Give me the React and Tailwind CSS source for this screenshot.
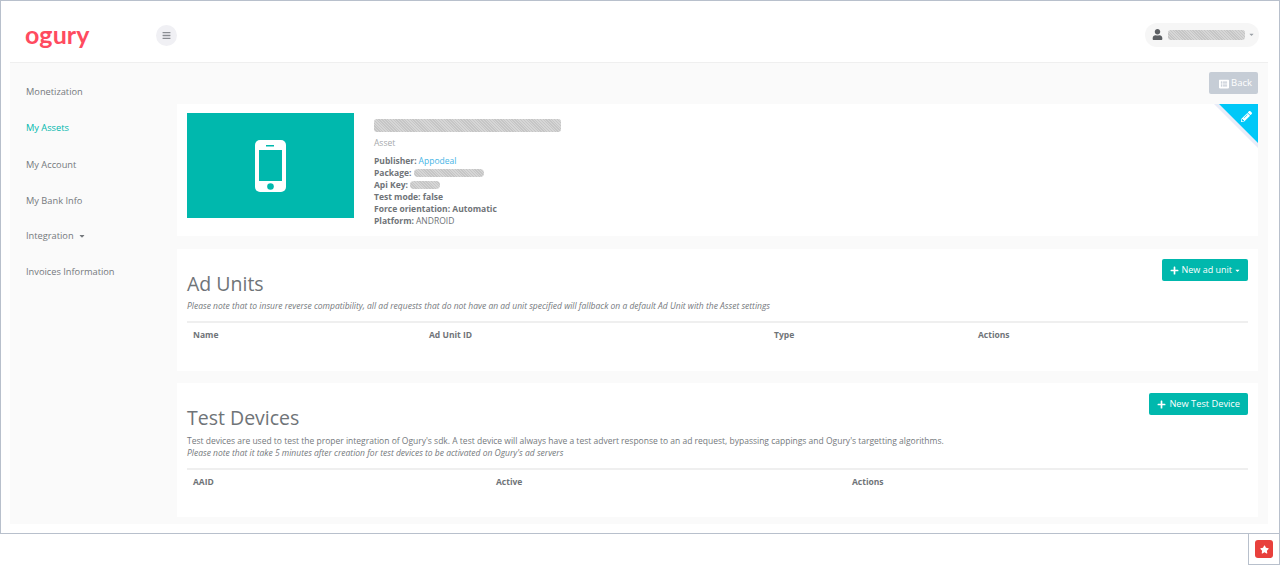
import { FaUser, FaBars, FaPencilAlt, FaPlus, FaStar, FaCaretDown, FaListAlt } from "react-icons/fa"

const Redacted = ({ className }) => (
    <span className={`inline-block bg-[#cdcdcd] bg-[repeating-linear-gradient(45deg,#c6c6c6_0px,#c6c6c6_1px,#d6d6d6_1px,#d6d6d6_2px)] ${className}`} />
)

const SideItem = ({ label, active, caret, className }) => (
    <div className={`flex items-center gap-1 pl-[16px] text-[9.25px] leading-[14px] ${active ? "text-[#00b8ad]" : "text-[#75797d]"} ${className}`}>
        {label}
        {caret && <FaCaretDown className="text-[8px]" />}
    </div>
)

const InfoRow = ({ label, children }) => (
    <div className="flex items-center h-[12px] text-[8.5px] leading-[12px] text-[#6f7478]">
        <span className="font-bold">{label}</span>
        {children}
    </div>
)

const TealButton = ({ label, caret }) => (
    <button className={`flex items-center h-[22px] pl-[8px] rounded-[2px] bg-[#00b8ad] text-white ${caret ? "gap-[2px] pr-[7px] text-[9px]" : "gap-[3px] pr-[8px] text-[9.25px]"}`}>
        <FaPlus className="text-[9px]" />
        {label}
        {caret && <FaCaretDown className="text-[7px]" />}
    </button>
)

const TableHead = ({ cols }) => (
    <div className="flex items-center h-[26px] border-t-2 border-[#efefef] pl-[6px] text-[8.5px] font-bold text-[#6f7478]">
        {cols.map((c) => (
            <div key={c.label} style={{ width: c.width }}>{c.label}</div>
        ))}
    </div>
)

const Phone = () => (
    <svg width="31" height="52" viewBox="0 0 31 52">
        <rect width="31" height="52" rx="5" fill="#fff" />
        <rect x="4" y="10" width="23" height="31" fill="#00b8ad" />
        <rect x="11" y="5" width="8" height="1.500" fill="#00b8ad" />
        <circle cx="15.500" cy="46.500" r="3.300" fill="#00b8ad" />
    </svg>
)

export default function App() {
    return (
        <div className="relative w-[1280px] h-[565px] overflow-hidden bg-white font-['Open_Sans',sans-serif]">
            <div className="h-[534px] border border-[#b8c0cc] flex flex-col">
                <header className="h-[61px] shrink-0 flex items-center pt-[6px] pl-[24px] pr-[20px]">
                    <div className="w-[131px] -mt-[1px] font-['Lato',sans-serif] text-[25px] leading-none font-bold tracking-[0.1px] text-[#ff4b5f]">ogury</div>
                    <div className="flex items-center justify-center w-[21px] h-[21px] mt-[1px] rounded-full bg-[#f0f0f4] text-[#8a8d92]">
                        <FaBars className="text-[9px]" />
                    </div>
                    <div className="ml-auto flex items-center w-[114px] h-[24px] pl-[7px] rounded-full bg-[#f6f6f6]">
                        <FaUser className="text-[11px] text-[#5c5f63]" />
                        <Redacted className="ml-[5px] w-[77px] h-[10px] rounded-[3px]" />
                        <FaCaretDown className="ml-[3px] text-[7px] text-[#9aa0a6]" />
                    </div>
                </header>
                <div className="flex ml-[9px] mr-[11px] h-[462px] border-t border-[#efefef] bg-[#fafafa]">
                    <nav className="w-[167px] shrink-0 pt-[22px]">
                        <SideItem label="Monetization" />
                        <SideItem label="My Assets" active className="mt-[22px]" />
                        <SideItem label="My Account" className="mt-[23px]" />
                        <SideItem label="My Bank Info" className="mt-[22px]" />
                        <SideItem label="Integration" caret className="mt-[21px]" />
                        <SideItem label="Invoices Information" className="mt-[22px]" />
                    </nav>
                    <main className="w-[1081px] flex flex-col">
                        <div className="flex justify-end pt-[9px] h-[41px]">
                            <button className="flex items-center gap-[2px] w-[49px] h-[22px] pl-[10px] pt-[1px] rounded-[2px] bg-[#c6cdd6] text-white text-[9.5px]">
                                <FaListAlt className="text-[10px]" />
                                Back
                            </button>
                        </div>
                        <section className="relative h-[132px] bg-white flex pt-[9px] pl-[10px] overflow-hidden">
                            <div className="flex items-center justify-center w-[167px] h-[105px] bg-[#00b8ad]">
                                <Phone />
                            </div>
                            <div className="ml-[20px]">
                                <Redacted className="block w-[187px] h-[13px] mt-[6px] rounded-[3px]" />
                                <div className="-mt-[1px] text-[8.5px] leading-[12px] text-[#a6a9ac]">Asset</div>
                                <div className="mt-[6px]">
                                    <InfoRow label="Publisher:"><span className="ml-[2px] font-normal text-[#45b5e6]">Appodeal</span></InfoRow>
                                    <InfoRow label="Package:"><Redacted className="ml-[2px] w-[70px] h-[8px] rounded-full" /></InfoRow>
                                    <InfoRow label="Api Key:"><Redacted className="ml-[2px] w-[30px] h-[8px] rounded-full" /></InfoRow>
                                    <InfoRow label="Test mode: false" />
                                    <InfoRow label="Force orientation: Automatic" />
                                    <InfoRow label="Platform:"><span className="ml-[2px]">ANDROID</span></InfoRow>
                                </div>
                            </div>
                            <svg className="absolute top-0 right-0" width="44" height="44" viewBox="0 0 44 44">
                                <path d="M0 0H5L44 39V44Z" fill="#e9ecf8" />
                                <path d="M5 0H44V39Z" fill="#00c8f8" />
                            </svg>
                            <FaPencilAlt className="absolute top-[7px] right-[6px] text-[11px] text-white" />
                        </section>
                        <section className="mt-[13px] h-[122px] bg-white px-[10px] pt-[10px]">
                            <div className="flex justify-between">
                                <h2 className="mt-[11px] text-[19.5px] leading-[28px] text-[#6f7478]">Ad Units</h2>
                                <TealButton label="New ad unit" caret />
                            </div>
                            <p className="mt-[2px] text-[8.5px] leading-[12px] italic text-[#75797d]">Please note that to insure reverse compatibility, all ad requests that do not have an ad unit specified will fallback on a default Ad Unit with the Asset settings</p>
                            <div className="mt-[9px]">
                                <TableHead cols={[{ label: "Name", width: 236 }, { label: "Ad Unit ID", width: 345 }, { label: "Type", width: 204 }, { label: "Actions", width: 100 }]} />
                            </div>
                        </section>
                        <section className="mt-[12px] h-[134px] bg-white px-[10px] pt-[10px]">
                            <div className="flex justify-between">
                                <h2 className="mt-[11px] text-[19.5px] leading-[28px] text-[#6f7478]">Test Devices</h2>
                                <TealButton label="New Test Device" />
                            </div>
                            <p className="mt-[3px] text-[8.5px] leading-[12px] text-[#75797d]">Test devices are used to test the proper integration of Ogury's sdk. A test device will always have a test advert response to an ad request, bypassing cappings and Ogury's targetting algorithms.</p>
                            <p className="text-[8.5px] leading-[12px] italic text-[#75797d]">Please note that it take 5 minutes after creation for test devices to be activated on Ogury's ad servers</p>
                            <div className="mt-[9px]">
                                <TableHead cols={[{ label: "AAID", width: 303 }, { label: "Active", width: 356 }, { label: "Actions", width: 100 }]} />
                            </div>
                        </section>
                    </main>
                </div>
            </div>
            <div className="absolute top-[533px] right-0 flex items-center justify-center w-[32px] h-[32px] border border-[#b8c0cc]">
                <div className="flex items-center justify-center w-[18px] h-[18px] rounded-[3px] bg-[#e8403c]">
                    <FaStar className="text-[9px] text-white" />
                </div>
            </div>
        </div>
    )
}
